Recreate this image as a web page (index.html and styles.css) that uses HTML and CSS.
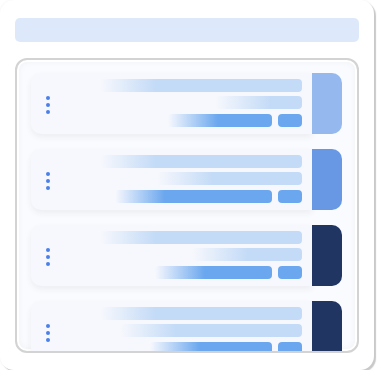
FILE: index.html
```html
<!DOCTYPE html>
<html>
<head>
  <title>Lista</title>
  <meta charset="UTF-8">
  <link rel="stylesheet" href="styles.css">
</head>
<body>
  <div class="frame">
    <div class="search"></div>
    <div class="list">
      <div class="row">
        <div class="card">
          <div class="dots"><span></span><span></span><span></span></div>
          <div class="bars">
            <div class="bar light" style="width:202px"></div>
            <div class="bar light mid" style="width:87px"></div>
            <div class="last">
              <div class="bar dark" style="width:104px"></div>
              <div class="chip"></div>
            </div>
          </div>
        </div>
        <div class="tab tab-1"></div>
      </div>
      <div class="row">
        <div class="card">
          <div class="dots"><span></span><span></span><span></span></div>
          <div class="bars">
            <div class="bar light" style="width:202px"></div>
            <div class="bar light mid" style="width:145px"></div>
            <div class="last">
              <div class="bar dark" style="width:157px"></div>
              <div class="chip"></div>
            </div>
          </div>
        </div>
        <div class="tab tab-2"></div>
      </div>
      <div class="row">
        <div class="card">
          <div class="dots"><span></span><span></span><span></span></div>
          <div class="bars">
            <div class="bar light" style="width:202px"></div>
            <div class="bar light mid" style="width:110px"></div>
            <div class="last">
              <div class="bar dark" style="width:117px"></div>
              <div class="chip"></div>
            </div>
          </div>
        </div>
        <div class="tab tab-3"></div>
      </div>
      <div class="row">
        <div class="card">
          <div class="dots"><span></span><span></span><span></span></div>
          <div class="bars">
            <div class="bar light" style="width:202px"></div>
            <div class="bar light mid" style="width:182px"></div>
            <div class="last">
              <div class="bar dark" style="width:122px"></div>
              <div class="chip"></div>
            </div>
          </div>
        </div>
        <div class="tab tab-3"></div>
      </div>
    </div>
  </div>
</body>
</html>
```

FILE: styles.css
```css
body {
  margin: 0;
  background-color: #ffffff;
  font-family: "Liberation Sans", Arial, sans-serif;
}
.frame {
  width: 374px;
  height: 370px;
  box-sizing: border-box;
  padding: 18px 15px 0 15px;
  background-color: #ffffff;
  border-radius: 14px;
  box-shadow: 2px 2px 1px #c9c9c9, 0 0 3px rgba(0, 0, 0, 0.06);
}
.search {
  height: 24px;
  background-color: #dde9fb;
  border-radius: 5px;
}
.list {
  margin-top: 16px;
  height: 295px;
  box-sizing: border-box;
  padding: 13px 15px 0 14px;
  background-color: #fafbfe;
  border: 2px solid #d3d3d3;
  border-radius: 12px;
  box-shadow: inset 0 0 0 2px #ffffff, inset 0 0 8px rgba(0, 0, 0, 0.06);
  overflow: hidden;
  display: flex;
  flex-direction: column;
  gap: 15px;
}
.row {
  display: flex;
  flex-shrink: 0;
  height: 61px;
}
.card {
  width: 281px;
  box-sizing: border-box;
  padding: 6px 10px 0 15px;
  background-color: #f7f8fd;
  border-radius: 10px 0 0 10px;
  box-shadow: 0 3px 6px rgba(40, 50, 90, 0.07);
  display: flex;
  align-items: flex-start;
}
.dots {
  display: flex;
  flex-direction: column;
  gap: 3px;
  margin-top: 17px;
}
.dots span {
  width: 4px;
  height: 4px;
  border-radius: 50%;
  background-color: #4a80ea;
}
.bars {
  flex: 1;
  display: flex;
  flex-direction: column;
  align-items: flex-end;
}
.bar {
  height: 13px;
  border-radius: 4px;
}
.light {
  background: linear-gradient(to right, rgba(196, 219, 247, 0), #c4dbf7 55px);
}
.mid {
  margin-top: 4px;
}
.last {
  display: flex;
  gap: 6px;
  margin-top: 5px;
}
.dark {
  background: linear-gradient(to right, rgba(106, 167, 238, 0), #6aa7ee 50px);
}
.chip {
  width: 24px;
  height: 13px;
  border-radius: 4px;
  background-color: #6aa7ee;
}
.tab {
  width: 30px;
  border-radius: 0 10px 10px 0;
}
.tab-1 {
  background-color: #95b8ee;
}
.tab-2 {
  background-color: #6898e3;
}
.tab-3 {
  background-color: #213562;
}
```
